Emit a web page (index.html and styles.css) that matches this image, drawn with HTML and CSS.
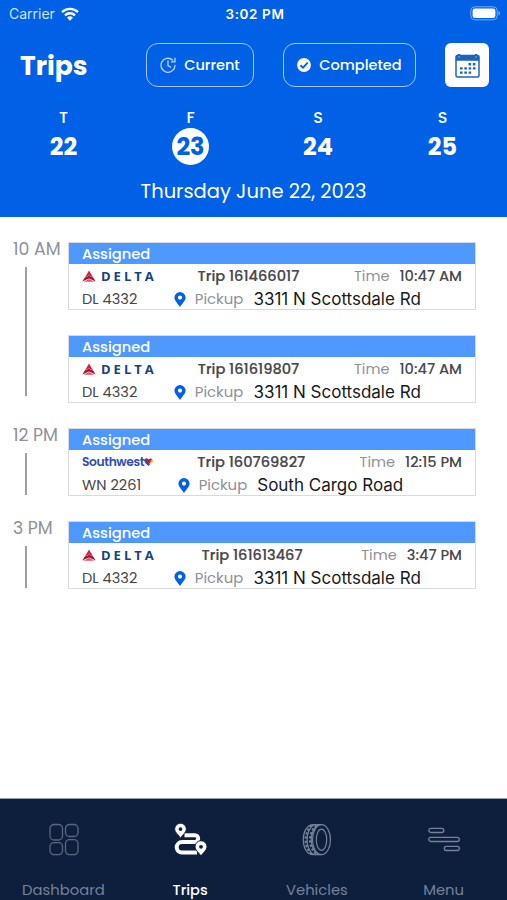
FILE: index.html
```html
<!DOCTYPE html>
<html lang="en">
<head>
  <meta charset="UTF-8">
  <meta name="viewport" content="width=device-width, initial-scale=1.0">
  <title>Trips</title>
  <link rel="stylesheet" href="styles.css">
</head>
<body>
  <!-- Shared symbols -->
  <svg class="symbols" width="0" height="0">
    <symbol id="pin" viewBox="0 0 12 15">
      <path fill-rule="evenodd" d="M6 0a5.6 5.6 0 0 0-5.6 5.6C.4 8.500 3.200 11 6 15c2.800-4 5.600-6.500 5.600-9.400A5.600 5.600 0 0 0 6 0zm0 3.500a2.100 2.100 0 1 1 0 4.200 2.100 2.100 0 0 1 0-4.200z"/>
    </symbol>
    <symbol id="delta-mark" viewBox="0 0 14 12">
      <path fill="#d4213d" d="M7 .5L11 7.300 7 5.600 3 7.300z"/>
      <path fill="#a5152f" d="M2.800 7.500L7 5.700l4.200 1.800L13.700 11.400 7 8.500 .3 11.400z"/>
      <path fill="#e0566b" d="M1.500 11.700L7 9l5.500 2.700z"/>
    </symbol>
    <symbol id="heart" viewBox="0 0 9 8">
      <path fill="#304cb2" d="M.3 1.500C1.400.2 3.400.3 4.500 1.500L6.500 5.800 4.600 8C2.500 6.600-.6 3.800.3 1.500z"/>
      <path fill="#d5152e" d="M1.500.6c1.100-.4 2.300 0 3 .9C5.500.3 7.300.1 8.300 1.100L5.900 6.700z"/>
      <path fill="#ffbf27" d="M8 .9c1.300.8 1.200 2.500 0 3.800L5.900 6.800 5.400 5.600z"/>
    </symbol>
  </svg>

  <div class="app">
    <header class="header">
      <div class="status-bar">
        <div class="carrier">
          <span>Carrier</span>
          <svg width="18" height="14" viewBox="0 0 18 14" fill="none" stroke="#fff" stroke-width="2.400">
            <path d="M1 5.200a11.400 11.400 0 0 1 16 0"/>
            <path d="M4 8.300a7.200 7.200 0 0 1 10 0"/>
            <path fill="#fff" stroke="none" d="M9 13.700L6 10.700a4.300 4.300 0 0 1 6 0z"/>
          </svg>
        </div>
        <div class="clock">3:02 PM</div>
        <div class="battery">
          <svg width="31" height="15" viewBox="0 0 31 15">
            <rect x=".8" y=".8" width="26.400" height="13" rx="4" fill="none" stroke="#78acf5"/>
            <rect x="2.600" y="2.600" width="22.800" height="9.400" rx="2.200" fill="#fff"/>
            <path d="M28.500 5c2 .6 2 4 0 4.600z" fill="#78acf5"/>
          </svg>
        </div>
      </div>

      <div class="toolbar">
        <h1 class="title">Trips</h1>
        <button class="filter-button current">
          <svg width="16" height="16" viewBox="0 0 16 16" fill="none" stroke="#b9d5fb" stroke-width="1.300" stroke-linecap="round">
            <path d="M12.600 3A7 7 0 1 0 15 8.400"/>
            <path d="M15 1.200v3.600h-3.600M8 4v4.600l2.600 1.500"/>
          </svg>
          <span>Current</span>
        </button>
        <button class="filter-button completed">
          <svg width="14" height="14" viewBox="0 0 14 14">
            <circle cx="7" cy="7" r="6.900" fill="#fff"/>
            <path d="M3.500 7.200L6 9.600l4.700-4.900" fill="none" stroke="#0061e6" stroke-width="1.900"/>
          </svg>
          <span>Completed</span>
        </button>
        <button class="calendar-button">
          <svg width="25" height="25" viewBox="0 0 25 25">
            <rect x="1" y="2.500" width="23" height="21.500" rx="1.500" fill="#fff" stroke="#1f63bd" stroke-width="1.500"/>
            <path d="M.8 7.800V3.800C.8 2.500 1.500 2 2.500 2h20c1 0 1.700.5 1.700 1.800v4z" fill="#1f63bd"/>
            <path d="M4 1v3.500M21 1v3.500" stroke="#1f63bd" stroke-width="2.500"/>
            <path d="M4 3.200v1.500M21 3.200v1.500" stroke="#a9c9f3" stroke-width="1"/>
            <path d="M13.500 11.300H21M5 15.400h16M5 19.600h12" fill="none" stroke="#1f63bd" stroke-width="2.400" stroke-dasharray="2.600 1.700"/>
          </svg>
        </button>
      </div>

      <div class="days">
        <div class="day"><span class="day-name">T</span><span class="day-number">22</span></div>
        <div class="day selected"><span class="day-name">F</span><span class="day-number">23</span></div>
        <div class="day"><span class="day-name">S</span><span class="day-number">24</span></div>
        <div class="day"><span class="day-name">S</span><span class="day-number">25</span></div>
      </div>
      <div class="full-date">Thursday June 22, 2023</div>
    </header>

    <main class="schedule">
      <section class="hour-group morning">
        <div class="hour"><span>10 AM</span></div>
        <div class="trips">
          <article class="trip">
            <div class="trip-status">Assigned</div>
            <div class="trip-row">
              <div class="airline delta"><svg width="14" height="12"><use href="#delta-mark"/></svg><span>DELTA</span></div>
              <div class="trip-id">Trip 161466017</div>
              <div class="trip-time"><span class="label">Time</span><span>10:47 AM</span></div>
            </div>
            <div class="trip-row pickup">
              <span class="flight">DL 4332</span>
              <svg class="pin" width="12" height="15"><use href="#pin"/></svg>
              <span class="label">Pickup</span>
              <span class="address">3311 N Scottsdale Rd</span>
            </div>
          </article>
          <article class="trip">
            <div class="trip-status">Assigned</div>
            <div class="trip-row">
              <div class="airline delta"><svg width="14" height="12"><use href="#delta-mark"/></svg><span>DELTA</span></div>
              <div class="trip-id">Trip 161619807</div>
              <div class="trip-time"><span class="label">Time</span><span>10:47 AM</span></div>
            </div>
            <div class="trip-row pickup">
              <span class="flight">DL 4332</span>
              <svg class="pin" width="12" height="15"><use href="#pin"/></svg>
              <span class="label">Pickup</span>
              <span class="address">3311 N Scottsdale Rd</span>
            </div>
          </article>
        </div>
      </section>

      <section class="hour-group">
        <div class="hour"><span>12 PM</span></div>
        <div class="trips">
          <article class="trip">
            <div class="trip-status">Assigned</div>
            <div class="trip-row">
              <div class="airline southwest"><span>Southwest</span><svg width="9" height="8"><use href="#heart"/></svg></div>
              <div class="trip-id">Trip 160769827</div>
              <div class="trip-time"><span class="label">Time</span><span>12:15 PM</span></div>
            </div>
            <div class="trip-row pickup">
              <span class="flight">WN 2261</span>
              <svg class="pin" width="12" height="15"><use href="#pin"/></svg>
              <span class="label">Pickup</span>
              <span class="address">South Cargo Road</span>
            </div>
          </article>
        </div>
      </section>

      <section class="hour-group">
        <div class="hour"><span>3 PM</span></div>
        <div class="trips">
          <article class="trip">
            <div class="trip-status">Assigned</div>
            <div class="trip-row">
              <div class="airline delta"><svg width="14" height="12"><use href="#delta-mark"/></svg><span>DELTA</span></div>
              <div class="trip-id">Trip 161613467</div>
              <div class="trip-time"><span class="label">Time</span><span>3:47 PM</span></div>
            </div>
            <div class="trip-row pickup">
              <span class="flight">DL 4332</span>
              <svg class="pin" width="12" height="15"><use href="#pin"/></svg>
              <span class="label">Pickup</span>
              <span class="address">3311 N Scottsdale Rd</span>
            </div>
          </article>
        </div>
      </section>
    </main>

    <nav class="tab-bar">
      <a class="tab">
        <svg width="32" height="34" viewBox="0 0 32 34" fill="none" stroke="#59677f" stroke-width="1.300">
          <rect x="3" y="1.500" width="12.500" height="15.500" rx="4"/>
          <rect x="18.500" y="1.500" width="12.500" height="12" rx="4"/>
          <rect x="3" y="19.600" width="12.500" height="12" rx="4"/>
          <rect x="18.500" y="16.600" width="12.500" height="15" rx="4"/>
        </svg>
        <span>Dashboard</span>
      </a>
      <a class="tab active">
        <svg width="34" height="34" viewBox="0 0 34 34" fill="none">
          <path d="M11.500 12.200h10.300a3.400 3.400 0 0 1 0 6.800H9a5.300 5.300 0 0 0 0 10.600H24" stroke="#fff" stroke-width="4"/>
          <path fill="#fff" stroke="#0e1f3d" stroke-width=".8" d="M7.500.3A5.800 5.800 0 0 0 1.700 6.100C1.700 9.500 5.400 11.500 7.500 15.200c2.100-3.700 5.800-5.700 5.800-9.100A5.800 5.800 0 0 0 7.500.3z"/>
          <circle cx="7.500" cy="6.100" r="1.900" fill="#0e1f3d"/>
          <path fill="#fff" stroke="#0e1f3d" d="M28 17.700a6 6 0 0 0-6 6c0 3.500 3.800 5.600 6 9.300 2.200-3.700 6-5.800 6-9.300a6 6 0 0 0-6-6z"/>
          <circle cx="28" cy="23.800" r="1.900" fill="#0e1f3d"/>
        </svg>
        <span>Trips</span>
      </a>
      <a class="tab">
        <svg width="32" height="34" viewBox="0 0 32 34" fill="none" stroke="#75829a" stroke-width="1.200">
          <ellipse cx="20.500" cy="16.700" rx="9" ry="15"/>
          <ellipse cx="20.500" cy="16.700" rx="5.200" ry="10.600"/>
          <path d="M20.500 1.700H12C6 1.700 2.300 8.500 2.300 16.700S6 31.700 12 31.700h8.500M12.500 1.700C4 8.500 4 25 12.500 31.700M17 2.600c-9 6.500-9 21.700 0 28.200"/>
          <path stroke-width="2.200" stroke-dasharray="2.400 1.800" d="M10.500 2.200C2.800 10 2.800 23.500 10.500 31.200M15.300 2.200C7 10 7 23.500 15.300 31.200"/>
        </svg>
        <span>Vehicles</span>
      </a>
      <a class="tab">
        <svg width="34" height="34" viewBox="0 0 34 34" fill="none" stroke="#75829a" stroke-width="1.300">
          <rect x="1.800" y="5.300" width="15" height="4.200" rx="2.100"/>
          <rect x="1.800" y="14.300" width="30.500" height="4.200" rx="2.100"/>
          <rect x="17.300" y="23.300" width="15" height="4.200" rx="2.100"/>
        </svg>
        <span>Menu</span>
      </a>
    </nav>
  </div>
</body>
</html>
```
FILE: styles.css
```css
:root {
  --blue: #0061e6;
  --light-blue: #4f98ff;
  --navy: #0e1f3d;
  --text: #47484b;
  --muted: #8e9197;
  --font: 'Poppins', 'Inter', sans-serif;
}

* {
  box-sizing: border-box;
}

body {
  margin: 0;
  font-family: var(--font);
  background-color: #fff;
  color: var(--text);
}

.symbols {
  display: none;
}

.app {
  display: flex;
  flex-direction: column;
  width: 507px;
  height: 900px;
  overflow: hidden;
  white-space: nowrap;
}

/* Header */
.header {
  flex: none;
  height: 217px;
  background-color: var(--blue);
  color: #fff;
}

.status-bar {
  display: grid;
  grid-template-columns: 1fr auto 1fr;
  align-items: center;
  height: 27px;
  padding: 0 6px 0 9px;
  font-family: 'Inter', sans-serif;
  font-size: 14px;
}

.carrier {
  display: flex;
  align-items: center;
  gap: 6px;
  color: #cfe1fb;
}

.clock {
  font-weight: 600;
  font-size: 13.5px;
  letter-spacing: 0.6px;
}

.battery {
  display: flex;
  justify-content: flex-end;
}

.toolbar {
  display: flex;
  height: 76px;
  padding: 16px 18px 0 20px;
}

.title {
  width: 126px;
  margin: 0;
  font-size: 26.5px;
  line-height: 45px;
  font-weight: 700;
}

.filter-button {
  display: flex;
  align-items: center;
  justify-content: center;
  height: 44px;
  padding: 0;
  border: 1.5px solid #a5c8fa;
  border-radius: 12px;
  background: none;
  color: #fff;
  font-family: var(--font);
  font-size: 14.5px;
  font-weight: 500;
}

.current {
  width: 108px;
  gap: 8px;
}

.completed {
  width: 133px;
  margin-left: 29px;
  gap: 8px;
}

.calendar-button {
  display: flex;
  align-items: center;
  justify-content: center;
  width: 44px;
  height: 44px;
  margin-left: auto;
  padding: 0;
  border: none;
  border-radius: 6px;
  background-color: #fff;
}

.days {
  display: grid;
  grid-template-columns: 127px 127px 128px 121px;
  padding-top: 5px;
}

.day {
  display: flex;
  flex-direction: column;
  align-items: center;
}

.day-name {
  font-size: 16px;
  line-height: 20px;
  font-weight: 500;
}

.day-number {
  width: 37px;
  height: 37px;
  border-radius: 50%;
  font-size: 24px;
  line-height: 37px;
  font-weight: 700;
  text-align: center;
}

.selected .day-number {
  background-color: #fff;
  color: var(--blue);
}

.full-date {
  margin-top: 12px;
  font-size: 19.5px;
  line-height: 30px;
  text-align: center;
}

/* Schedule */
.schedule {
  flex: 1;
  padding: 25px 31px 0 13px;
}

.hour-group {
  display: flex;
  margin-bottom: 25px;
}

.hour {
  display: flex;
  flex-direction: column;
  width: 55px;
  font-size: 17.3px;
  line-height: 14px;
  color: var(--muted);
}

.hour::after {
  content: '';
  flex: 1;
  width: 1.5px;
  margin: 11px 0 1px 12px;
  background-color: #a0a0a2;
}

.morning .hour::after {
  margin-bottom: 7px;
}

.trips {
  display: flex;
  flex: 1;
  flex-direction: column;
  gap: 25px;
}

.trip {
  height: 68px;
  border: 1px solid #d9dadc;
}

.trip-status {
  height: 21px;
  padding-left: 13px;
  background-color: var(--light-blue);
  color: #fff;
  font-size: 14.7px;
  line-height: 22px;
  font-weight: 500;
}

.trip-row {
  display: flex;
  align-items: center;
  justify-content: space-between;
  height: 23px;
  padding: 1px 13px 0 13px;
  font-size: 14.6px;
}

.airline {
  display: flex;
  align-items: center;
  width: 61px;
}

.airline svg,
.pin {
  flex: none;
}

.delta {
  gap: 5px;
  color: #17447a;
  font-family: 'Open Sans', sans-serif;
  font-size: 13px;
  font-weight: 700;
  letter-spacing: 3px;
}

.southwest {
  color: #304cb2;
  font-size: 12.3px;
  font-weight: 600;
  letter-spacing: -0.4px;
}

.trip-id {
  font-weight: 500;
  -webkit-text-stroke: 0.2px;
}

.trip-time {
  display: flex;
  gap: 10px;
  font-weight: 500;
}

.label {
  color: var(--muted);
  font-weight: 400;
}

.pickup {
  justify-content: flex-start;
}

.pickup .label {
  font-size: 14.9px;
}

.pin {
  margin: 0 9px 0 36.5px;
  fill: var(--blue);
}

.address {
  margin-left: 10px;
  color: #18191b;
  font-family: 'Inter', sans-serif;
  font-size: 17px;
}

/* Bottom tabs */
.tab-bar {
  display: grid;
  grid-template-columns: repeat(4, 1fr);
  flex: none;
  height: 102px;
  border-top: 1px solid #9aa2b0;
  background-color: var(--navy);
}

.tab {
  display: flex;
  flex-direction: column;
  align-items: center;
  padding-top: 24px;
  color: #75829a;
  font-size: 14.8px;
}

.tab span {
  margin-top: 23px;
  line-height: 20px;
}

.tab.active {
  color: #fff;
  font-size: 14.5px;
  font-weight: 500;
}
```
